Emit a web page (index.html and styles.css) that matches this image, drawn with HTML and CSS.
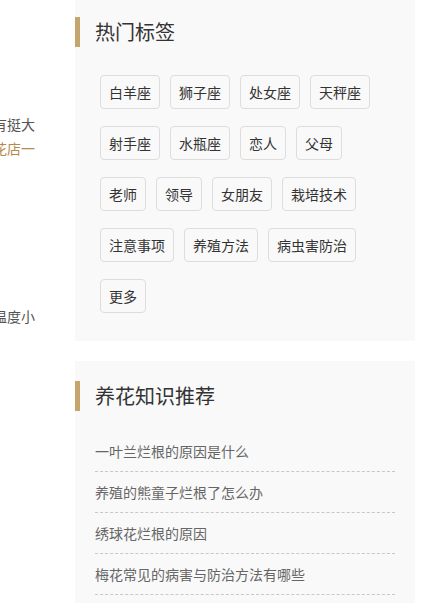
FILE: index.html
```html
<!DOCTYPE html>
<html lang="zh-CN">
<head>
    <meta charset="UTF-8">
    <meta name="viewport" content="width=device-width, initial-scale=1.0">
    <title>热门标签</title>
    <link rel="stylesheet" href="styles.css">
</head>
<body>
    <div class="page">
        <div class="main">
            <p class="intro">这种花的花期较长，观赏价值还有挺大</p>
            <p class="intro shop">可以到附近的花店一</p>
            <p class="intro late">夏季注意通风，昼夜温度小</p>
        </div>

        <div class="sidebar">
            <div class="panel">
                <h2 class="panel-title">热门标签</h2>
                <div class="tags">
                    <a class="tag" href="#">白羊座</a>
                    <a class="tag" href="#">狮子座</a>
                    <a class="tag" href="#">处女座</a>
                    <a class="tag" href="#">天秤座</a>
                    <a class="tag" href="#">射手座</a>
                    <a class="tag" href="#">水瓶座</a>
                    <a class="tag" href="#">恋人</a>
                    <a class="tag" href="#">父母</a>
                    <a class="tag" href="#">老师</a>
                    <a class="tag" href="#">领导</a>
                    <a class="tag" href="#">女朋友</a>
                    <a class="tag" href="#">栽培技术</a>
                    <a class="tag" href="#">注意事项</a>
                    <a class="tag" href="#">养殖方法</a>
                    <a class="tag" href="#">病虫害防治</a>
                    <a class="tag" href="#">更多</a>
                </div>
            </div>

            <div class="panel">
                <h2 class="panel-title">养花知识推荐</h2>
                <ul class="articles">
                    <li><a href="#">一叶兰烂根的原因是什么</a></li>
                    <li><a href="#">养殖的熊童子烂根了怎么办</a></li>
                    <li><a href="#">绣球花烂根的原因</a></li>
                    <li><a href="#">梅花常见的病害与防治方法有哪些</a></li>
                    <li><a href="#">月季花叶子发黄怎么办</a></li>
                </ul>
            </div>
        </div>
    </div>
</body>
</html>
```

FILE: styles.css
```css
body {
    margin: 0;
    padding: 0;
    background-color: #fff;
    font-family: "Noto Sans CJK SC", "Liberation Sans", sans-serif;
    color: #333;
    overflow: hidden;
}
a {
    text-decoration: none;
}
.page {
    display: flex;
    align-items: flex-start;
}
.main {
    width: 75px;
    flex-shrink: 0;
    padding-top: 112px;
}
.intro {
    width: 35px;
    margin: 0;
    font-size: 14px;
    line-height: 24px;
    color: #555;
    text-align: right;
    white-space: nowrap;
    direction: rtl;
}
.intro.shop {
    color: #b88a4a;
}
.intro.late {
    margin-top: 144px;
}
.sidebar {
    width: 340px;
    margin-top: -3px;
}
.panel {
    background-color: #f9f9f9;
    padding: 20px 0 28px;
    margin-bottom: 20px;
}
.panel-title {
    margin: 0;
    border-left: 5px solid #c5a56b;
    padding-left: 15px;
    font-size: 20px;
    font-weight: normal;
    line-height: 30px;
    color: #333;
}
.tags {
    display: flex;
    flex-wrap: wrap;
    gap: 17px 10px;
    margin-top: 28px;
    padding: 0 25px;
}
.tag {
    display: block;
    padding: 6px 8px;
    border: 1px solid #ddd;
    border-radius: 4px;
    font-size: 14px;
    line-height: 20px;
    color: #333;
}
.articles {
    list-style: none;
    margin: 20px 20px 0;
    padding: 0;
}
.articles li {
    border-bottom: 1px dashed #c8c8c8;
    line-height: 40px;
    font-size: 14px;
}
.articles a {
    color: #666;
}
```
